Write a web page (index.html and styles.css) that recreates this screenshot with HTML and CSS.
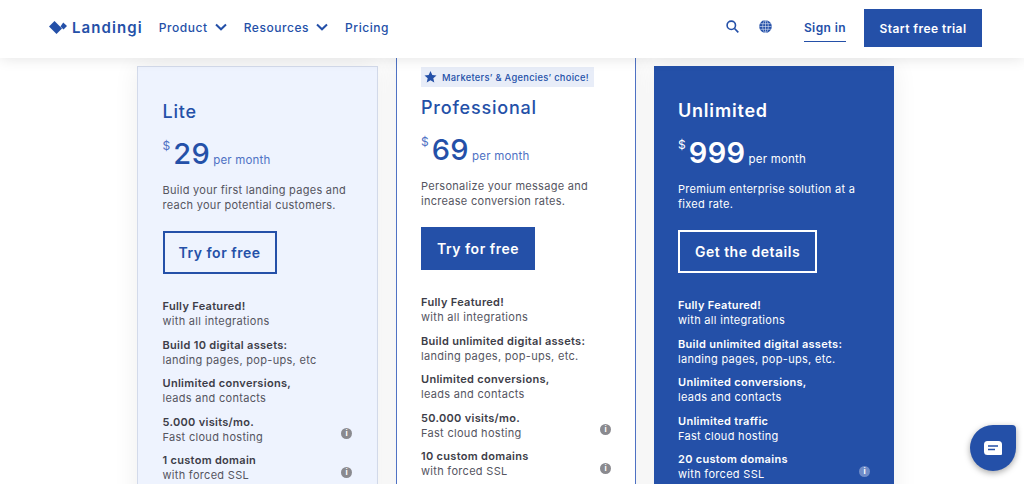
FILE: index.html
```html
<!DOCTYPE html>
<html lang="en">
<head>
<meta charset="utf-8">
<title>Landingi pricing</title>
<link rel="stylesheet" href="styles.css">
</head>
<body>
<header class="topbar">
  <a class="logo">
    <svg class="logo-mark" width="19" height="15" viewBox="0 0 19 15"><path d="M0 6.500 5.500 1 13 8.500 7.500 14z" fill="#2450a8"/><path d="M14.200 2.500 18 6l-3.500 3.500L11.500 6.500z" fill="#2450a8"/></svg>
    <span>Landingi</span>
  </a>
  <nav class="nav">
    <a class="nav-item">Product <svg class="chev" width="12" height="8" viewBox="0 0 12 8"><path d="M1 1.500 6 6.300l5-4.800" fill="none" stroke="#2450a8" stroke-width="2"/></svg></a>
    <a class="nav-item">Resources <svg class="chev" width="12" height="8" viewBox="0 0 12 8"><path d="M1 1.500 6 6.300l5-4.800" fill="none" stroke="#2450a8" stroke-width="2"/></svg></a>
    <a class="nav-item">Pricing</a>
  </nav>
  <div class="actions">
    <svg class="search" width="13" height="13" viewBox="0 0 13 13"><circle cx="5.300" cy="5.300" r="4.200" fill="none" stroke="#2450a8" stroke-width="1.600"/><path d="M8.500 8.500 12.300 12.300" stroke="#2450a8" stroke-width="1.700"/></svg>
    <svg class="globe" width="13" height="13" viewBox="0 0 13 13"><circle cx="6.500" cy="6.500" r="6.300" fill="#2450a8"/><g fill="none" stroke="#dfe6f5" stroke-width=".6"><ellipse cx="6.500" cy="6.500" rx="2.800" ry="6.200"/><path d="M6.500.3v12.400M.3 6.500h12.400M1.200 3.700h10.600M1.200 9.300h10.600"/></g></svg>
    <a class="signin">Sign in</a>
    <a class="cta">Start free trial</a>
  </div>
</header>
<main class="plans">
  <section class="card card-lite">
    <h2 class="plan-name">Lite</h2>
    <p class="price"><sup class="cur">$</sup><b class="amount">29</b><span class="per">per month</span></p>
    <p class="desc">Build your first landing pages and<br>reach your potential customers.</p>
    <a class="btn btn-outline">Try for free</a>
    <ul class="features">
      <li><b>Fully Featured!</b><br>with all integrations</li>
      <li><b>Build 10 digital assets:</b><br>landing pages, pop-ups, etc</li>
      <li><b>Unlimited conversions,</b><br>leads and contacts</li>
      <li><b>5.000 visits/mo.</b><br>Fast cloud hosting<i class="info">i</i></li>
      <li><b>1 custom domain</b><br>with forced SSL<i class="info">i</i></li>
    </ul>
  </section>
  <section class="card card-pro">
    <div class="badge"><svg width="13" height="12" viewBox="0 0 13 12"><path d="M6.500 0 8.300 4l4.200.4-3.200 2.800 1 4.300-3.800-2.300-3.800 2.300 1-4.300L.5 4.400 4.700 4z" fill="#2450a8"/></svg><span>Marketers’ &amp; Agencies’ choice!</span></div>
    <h2 class="plan-name">Professional</h2>
    <p class="price"><sup class="cur">$</sup><b class="amount">69</b><span class="per">per month</span></p>
    <p class="desc">Personalize your message and<br>increase conversion rates.</p>
    <a class="btn btn-solid">Try for free</a>
    <ul class="features">
      <li><b>Fully Featured!</b><br>with all integrations</li>
      <li><b>Build unlimited digital assets:</b><br>landing pages, pop-ups, etc.</li>
      <li><b>Unlimited conversions,</b><br>leads and contacts</li>
      <li><b>50.000 visits/mo.</b><br>Fast cloud hosting<i class="info">i</i></li>
      <li><b>10 custom domains</b><br>with forced SSL<i class="info">i</i></li>
    </ul>
  </section>
  <section class="card card-unl">
    <h2 class="plan-name">Unlimited</h2>
    <p class="price"><sup class="cur">$</sup><b class="amount">999</b><span class="per">per month</span></p>
    <p class="desc">Premium enterprise solution at a<br>fixed rate.</p>
    <a class="btn btn-white">Get the details</a>
    <ul class="features">
      <li><b>Fully Featured!</b><br>with all integrations</li>
      <li><b>Build unlimited digital assets:</b><br>landing pages, pop-ups, etc.</li>
      <li><b>Unlimited conversions,</b><br>leads and contacts</li>
      <li><b>Unlimited traffic</b><br>Fast cloud hosting</li>
      <li><b>20 custom domains</b><br>with forced SSL<i class="info">i</i></li>
    </ul>
  </section>
</main>
<button class="chat" aria-label="Chat"><svg width="18" height="14" viewBox="0 0 18 14"><path d="M3.500 0h11A3.500 3.500 0 0 1 18 3.500v9.500a1 1 0 0 1-1 1H3.500A3.500 3.500 0 0 1 0 10.500v-7A3.500 3.500 0 0 1 3.500 0z" fill="#fff"/><path d="M4 5h10M4 8.500h7" stroke="#2450a8" stroke-width="1.400"/></svg></button>
</body>
</html>
```
FILE: styles.css
```css
* { box-sizing: border-box; }
html, body { margin: 0; height: 484px; overflow: hidden; }
body { background: #fff; font-family: Inter, "Liberation Sans", sans-serif; color: #55555f; position: relative; }
.topbar { position: relative; z-index: 2; height: 58px; background: #fff; box-shadow: 0 0 14px rgba(0,0,0,.12); display: flex; align-items: center; padding: 0 42px 2px 49px; color: #2450a8; }
.logo { display: flex; align-items: center; gap: 4px; font-size: 15px; font-weight: 600; letter-spacing: 1.1px; margin-top: -2px; }
.nav { display: flex; gap: 17px; margin-left: 16px; margin-top: -2px; font-size: 12px; font-weight: 500; letter-spacing: .55px; }
.nav-item { display: flex; align-items: center; gap: 7px; }
.actions { margin-left: auto; display: flex; align-items: center; }
.search { margin-right: 20px; margin-top: -3px; }
.globe { margin-top: -3px; }
.signin { margin-left: 32px; font-size: 12px; font-weight: 600; letter-spacing: .4px; padding: 6px 0 6px; border-bottom: 1px solid #2450a8; }
.cta { margin-left: 18px; width: 118px; height: 38px; background: #2450a8; color: #fff; font-size: 12px; font-weight: 600; letter-spacing: .45px; display: flex; align-items: center; justify-content: center; }
.plans { display: flex; gap: 18px; padding-left: 137px; height: 426px; overflow: hidden; }
.card { width: 240px; flex: none; height: 500px; }
.card-lite { width: 241px; margin-top: 8px; background: #eef3fe; border: 1px solid #d3daea; padding: 34px 25px 0 24.500px; box-shadow: 0 0 24px rgba(0,0,0,.07); }
.card-pro { background: #fff; border-left: 1px solid #4f72c4; border-right: 1px solid #4f72c4; padding: 9px 24px 0; box-shadow: 0 0 24px rgba(0,0,0,.07); }
.card-unl { margin-top: 8px; background: #2450a8; color: #fff; padding: 34px 24px 0; box-shadow: 0 0 24px rgba(0,0,0,.07); }
.badge { display: flex; align-items: center; gap: 5px; height: 20px; width: 173px; padding-left: 3px; background: #e8edf8; color: #2450a8; font-size: 9.300px; font-weight: 500; letter-spacing: .3px; white-space: nowrap; margin-bottom: 10px; }
.plan-name { margin: 0; font-size: 18px; line-height: 22px; font-weight: 500; letter-spacing: .8px; color: #2450a8; }
.card-unl .plan-name { font-weight: 600; letter-spacing: .8px; }
.card-unl .plan-name, .card-unl .amount, .card-unl .per, .card-unl .cur { color: #fff; }
.price { margin: 15px 0 0; height: 32px; display: flex; align-items: baseline; line-height: 32px; color: #2450a8; }
.cur { font-size: 12px; align-self: flex-start; line-height: 16px; margin-right: 3px; color: #4f72c4; vertical-align: baseline; }
.amount { font-size: 29px; font-weight: 500; letter-spacing: .4px; margin-right: 3px; }
.card-unl .amount { font-weight: 600; }
.per { font-size: 11.500px; color: #4f72c4; letter-spacing: .2px; }
.desc { margin: 13px 0 0; font-size: 11px; line-height: 15px; letter-spacing: .28px; }
.btn { display: flex; align-items: center; justify-content: center; margin-top: 18px; width: 114px; height: 43px; font-size: 14px; font-weight: 600; letter-spacing: .5px; }
.btn-outline { border: 2px solid #2450a8; color: #2450a8; }
.btn-solid { background: #2450a8; color: #fff; }
.btn-white { border: 2px solid #fff; color: #fff; width: 139px; }
.features { list-style: none; margin: 25px 0 0; padding: 0; font-size: 11px; line-height: 15px; letter-spacing: .3px; }
.features li { position: relative; margin-bottom: 8.500px; }
.features b { font-weight: 600; color: #3d3d48; }
.card-unl .features b { color: #fff; }
.info { position: absolute; right: 0; top: 13.500px; width: 11px; height: 11px; border-radius: 50%; background: #8a8a8f; color: #fff; font-size: 8px; line-height: 11px; font-style: normal; font-weight: 700; text-align: center; letter-spacing: 0; }
.card-unl .info { background: #6f8cc8; }
.chat { position: absolute; left: 970px; top: 425px; width: 46px; height: 46px; border: 0; padding: 0; background: #2450a8; border-radius: 50% 4px 50% 50%; box-shadow: 0 2px 6px rgba(0,0,0,.35); display: flex; align-items: center; justify-content: center; }
```
